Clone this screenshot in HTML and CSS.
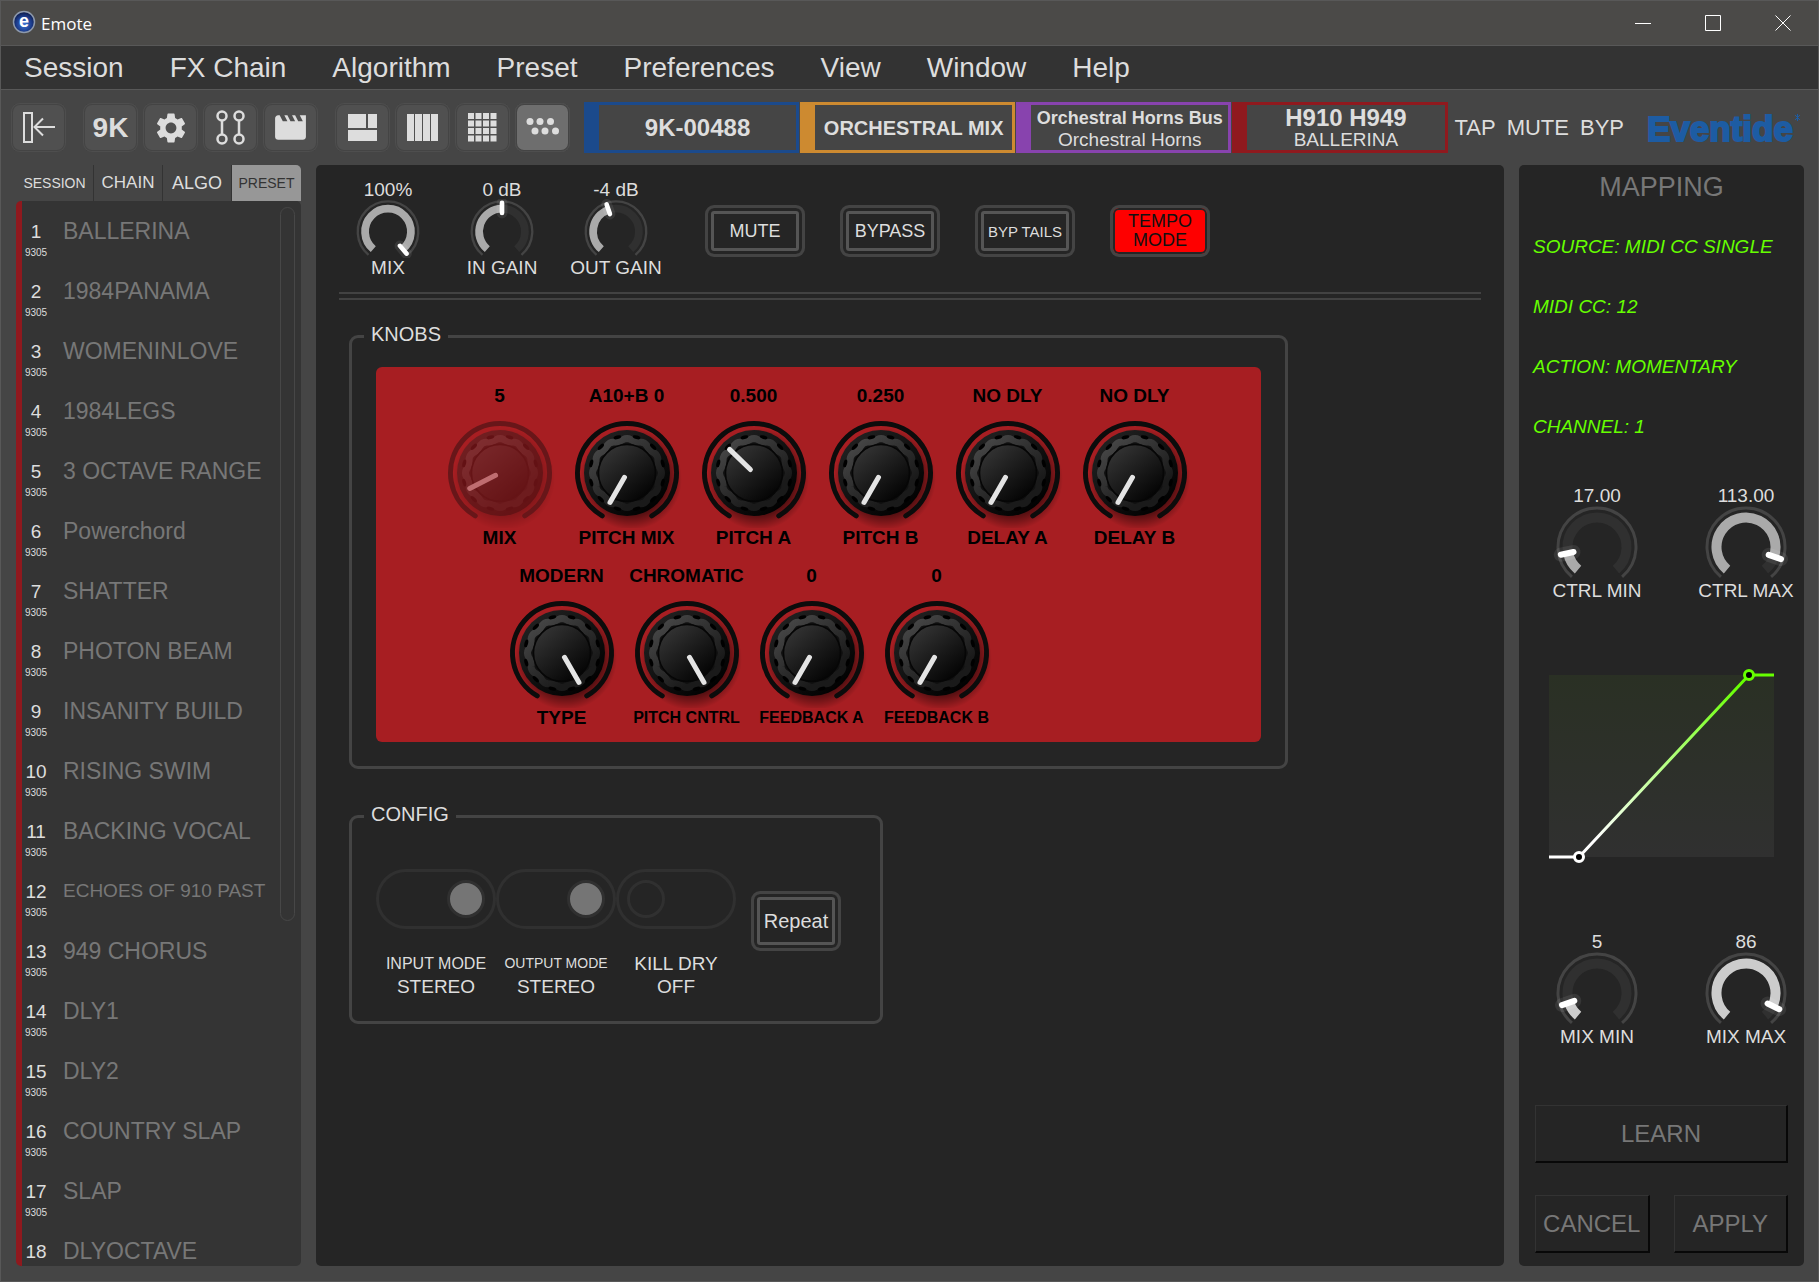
FILE: index.html
```html
<!DOCTYPE html>
<html lang="en">
<head>
    <meta charset="UTF-8">
    <meta name="viewport" content="width=device-width, initial-scale=1.0">
    <title>Emote</title>
    <link rel="stylesheet" href="styles.css">
</head>
<body>

<header class="titlebar">
    <svg class="app-icon" width="24" height="26" viewBox="0 0 24 26">
        <defs>
            <radialGradient id="appBall" cx="50%" cy="60%" r="60%">
                <stop offset="0" stop-color="#3f78d8"/>
                <stop offset="0.6" stop-color="#1c3c8c"/>
                <stop offset="1" stop-color="#0a1640"/>
            </radialGradient>
        </defs>
        <circle cx="12" cy="12" r="10.5" fill="url(#appBall)" stroke="#8d99ac" stroke-width="1.5"/>
        <text x="12" y="17" text-anchor="middle" class="app-e">e</text>
    </svg>
    <span class="app-name">Emote</span>
    <div class="window-buttons">
        <button aria-label="Minimize"><svg width="16" height="16"><path d="M0 8.5H16"/></svg></button>
        <button aria-label="Maximize"><svg width="16" height="16"><path d="M.5 .5H15.5V15.5H.5Z"/></svg></button>
        <button aria-label="Close"><svg width="16" height="16"><path d="M.5 .5L15.5 15.5M15.5 .5L.5 15.5"/></svg></button>
    </div>
</header>

<nav class="menubar">
    <button>Session</button>
    <button>FX Chain</button>
    <button>Algorithm</button>
    <button>Preset</button>
    <button>Preferences</button>
    <button>View</button>
    <button>Window</button>
    <button>Help</button>
</nav>

<div class="toolbar">
    <div class="tools">
        <button class="tool" aria-label="Collapse sidebar">
            <svg width="55" height="49"><path d="M13 10H21V39H13Z M44 24H24 M32 15.5L23.5 24L32 32.5" fill="none" stroke="#ddd" stroke-width="2"/></svg>
        </button>
    </div>
    <div class="tools">
        <button class="tool nine-k">9K</button>
        <button class="tool" aria-label="Settings">
            <svg width="36" height="36" viewBox="0 0 24 24"><path fill="#ddd" d="M19.14,12.94c0.04-0.3,0.06-0.61,0.06-0.94c0-0.32-0.02-0.64-0.07-0.94l2.03-1.58c0.18-0.14,0.23-0.41,0.12-0.61l-1.92-3.32c-0.12-0.22-0.37-0.29-0.59-0.22l-2.39,0.96c-0.5-0.38-1.03-0.7-1.62-0.94L14.4,2.81c-0.04-0.24-0.24-0.41-0.48-0.41h-3.84c-0.24,0-0.43,0.17-0.47,0.41L9.25,5.35C8.66,5.59,8.12,5.92,7.63,6.29L5.24,5.33c-0.22-0.08-0.47,0-0.59,0.22L2.74,8.87C2.62,9.08,2.66,9.34,2.86,9.48l2.03,1.58C4.84,11.36,4.8,11.69,4.8,12s0.02,0.64,0.07,0.94l-2.03,1.58c-0.18,0.14-0.23,0.41-0.12,0.61l1.92,3.32c0.12,0.22,0.37,0.29,0.59,0.22l2.39-0.96c0.5,0.38,1.03,0.7,1.62,0.94l0.36,2.54c0.05,0.24,0.24,0.41,0.48,0.41h3.84c0.24,0,0.44-0.17,0.47-0.41l0.36-2.54c0.59-0.24,1.13-0.56,1.62-0.94l2.39,0.96c0.22,0.08,0.47,0,0.59-0.22l1.92-3.32c0.12-0.22,0.07-0.47-0.12-0.61L19.14,12.94z M12,15.6c-1.98,0-3.6-1.62-3.6-3.6s1.62-3.6,3.6-3.6s3.6,1.62,3.6,3.6S13.98,15.6,12,15.6z"/></svg>
        </button>
        <button class="tool" aria-label="Routing">
            <svg width="55" height="49" fill="none" stroke="#ddd" stroke-width="2.5">
                <circle cx="19" cy="13" r="4.5"/><circle cx="36" cy="13" r="4.5"/>
                <circle cx="19" cy="36" r="4.5"/><circle cx="36" cy="36" r="4.5"/>
                <path d="M19 17.5V31.5M36 17.5V31.5"/>
            </svg>
        </button>
        <button class="tool" aria-label="Scenes">
            <svg width="37" height="37" viewBox="0 0 24 24"><path fill="#ddd" d="M18 4l2 4h-3l-2-4h-2l2 4h-3l-2-4H8l2 4H7L5 4H4c-1.1 0-1.99.9-1.99 2L2 18c0 1.1.9 2 2 2h16c1.1 0 2-.9 2-2V4h-4z"/></svg>
        </button>
    </div>
    <div class="tools">
        <button class="tool" aria-label="Split view">
            <svg width="55" height="49"><path fill="#ddd" d="M13 11H31V25H13ZM33 11H42V25H33ZM13 27H42V38H13Z"/></svg>
        </button>
        <button class="tool" aria-label="Column view">
            <svg width="55" height="49"><path fill="#ddd" d="M12 11H19V38H12ZM20 11H27V38H20ZM28 11H35V38H28ZM36 11H43V38H36Z"/></svg>
        </button>
        <button class="tool" aria-label="Grid view">
            <svg width="55" height="49"><path stroke="#ddd" stroke-width="6" stroke-dasharray="6 1.5" d="M13 13H42M13 20.5H42M13 28H42M13 35.5H42"/></svg>
        </button>
        <button class="tool active" aria-label="Knob view">
            <svg width="55" height="49" fill="#ddd">
                <circle cx="15" cy="18.5" r="3.5"/><circle cx="25" cy="18.5" r="3.5"/><circle cx="35.5" cy="18.5" r="3.5"/>
                <circle cx="20" cy="28" r="3.5"/><circle cx="30" cy="28" r="3.5"/><circle cx="40.5" cy="28" r="3.5"/>
            </svg>
        </button>
    </div>

    <div class="tracks">
        <button class="track blue"><b>9K-00488</b></button>
        <button class="track orange"><b class="medium">ORCHESTRAL MIX</b></button>
        <button class="track purple"><b class="small">Orchestral Horns Bus</b><span>Orchestral Horns</span></button>
        <button class="track red"><b>H910 H949</b><span>BALLERINA</span></button>
    </div>

    <div class="quick">
        <button>TAP</button>
        <button>MUTE</button>
        <button>BYP</button>
    </div>
    <svg class="logo" width="156" height="42" role="img" aria-label="Eventide">
        <text x="1" y="34">Eventide</text>
        <path d="M149 8l5 5M154 8l-5 5M151.5 7v7" stroke="#1d5ca3" stroke-width="1"/>
    </svg>
</div>

<div class="workspace">
    <aside class="sidebar">
        <div class="tabs">
            <button class="tight">SESSION</button>
            <button>CHAIN</button>
            <button class="algo">ALGO</button>
            <button class="tight active">PRESET</button>
        </div>
        <div class="presets">
            <ol id="presetList"></ol>
            <div class="scrollbar"></div>
        </div>
    </aside>

    <main class="panel">
        <div class="levels">
            <div class="dials" id="levelDials"></div>
            <div class="switches">
                <button class="framed">MUTE</button>
                <button class="framed">BYPASS</button>
                <button class="framed tails">BYP TAILS</button>
                <button class="framed on">TEMPO MODE</button>
            </div>
        </div>
        <div class="rule"></div>

        <fieldset class="group knobs-group">
            <legend>KNOBS</legend>
            <div class="faceplate">
                <div class="knob-row" id="knobsTop"></div>
                <div class="knob-row second" id="knobsBottom"></div>
            </div>
        </fieldset>

        <fieldset class="group config-group">
            <legend>CONFIG</legend>
            <label class="toggle"><input type="checkbox" checked><span class="long">INPUT MODE</span><span>STEREO</span></label>
            <label class="toggle"><input type="checkbox" checked><span class="longer">OUTPUT MODE</span><span>STEREO</span></label>
            <label class="toggle"><input type="checkbox"><span>KILL DRY</span><span>OFF</span></label>
            <button class="framed repeat">Repeat</button>
        </fieldset>
    </main>

    <aside class="panel mapping">
        <h2>MAPPING</h2>
        <ul class="source">
            <li>SOURCE: MIDI CC SINGLE</li>
            <li>MIDI CC: 12</li>
            <li>ACTION: MOMENTARY</li>
            <li>CHANNEL: 1</li>
        </ul>
        <div class="map-dials" id="ctrlDials"></div>
        <svg class="curve" width="241" height="198" viewBox="-8 -8 241 198">
            <defs>
                <linearGradient id="curveBack" x1="0" y1="0" x2="0" y2="1">
                    <stop offset="0" stop-color="#2a3024"/>
                    <stop offset="1" stop-color="#303030"/>
                </linearGradient>
                <linearGradient id="curveLine" gradientUnits="userSpaceOnUse" x1="0" y1="182" x2="0" y2="0">
                    <stop offset="0.1" stop-color="#fff"/>
                    <stop offset="0.95" stop-color="#6f0"/>
                </linearGradient>
            </defs>
            <rect width="225" height="182" fill="url(#curveBack)"/>
            <path d="M0 182H30L200 0H225" fill="none" stroke="url(#curveLine)" stroke-width="3"/>
            <circle cx="30" cy="182" r="4.5" stroke="#fff" stroke-width="3"/>
            <circle cx="200" cy="0" r="4.5" stroke="#6f0" stroke-width="3"/>
        </svg>
        <div class="map-dials" id="mixDials"></div>
        <div class="actions">
            <button class="learn">LEARN</button>
            <button>CANCEL</button>
            <button>APPLY</button>
        </div>
    </aside>
</div>

<!-- shared knob artwork -->
<svg class="defs" width="0" height="0" aria-hidden="true">
    <defs>
        <linearGradient id="bodyFill" x1="0.1" y1="0.1" x2="0.8" y2="0.9">
            <stop offset="0" stop-color="#222"/><stop offset="1" stop-color="#020202"/>
        </linearGradient>
        <linearGradient id="rimFill" x1="0.15" y1="0.1" x2="0.7" y2="0.8">
            <stop offset="0" stop-color="#444"/><stop offset="1" stop-color="#1a1a1a"/>
        </linearGradient>
        <linearGradient id="capFill" x1="0.15" y1="0.1" x2="0.8" y2="0.9">
            <stop offset="0" stop-color="#333"/><stop offset="1" stop-color="#050505"/>
        </linearGradient>
        <radialGradient id="shadowFill">
            <stop offset="0.7" stop-color="#000" stop-opacity="0.5"/><stop offset="1" stop-color="#000" stop-opacity="0"/>
        </radialGradient>
        <g id="knobBody"></g>
    </defs>
</svg>

<script src="script.js"></script>
</body>
</html>
```

FILE: styles.css
```css
* { box-sizing: border-box; }
body {
    margin: 0;
    height: 100vh;
    display: flex;
    flex-direction: column;
    background: #454545;
    border: 1px solid #585858;
    color: #ddd;
    font-family: "Liberation Sans", Arial, sans-serif;
    font-size: 19px;
    overflow: hidden;
}
button {
    margin: 0;
    padding: 0;
    border: none;
    background: none;
    color: inherit;
    font: inherit;
    cursor: pointer;
}
.defs { position: absolute; }

/* title bar */
.titlebar {
    height: 45px;
    flex: none;
    display: flex;
    align-items: center;
    padding-left: 11px;
    background: #4b4a48;
    border-bottom: 1px solid #585858;
}
.app-e { font: bold 18px "Liberation Sans", sans-serif; fill: #fff; }
.app-name {
    margin-left: 5px;
    color: #fff;
    font-family: "Open Sans", sans-serif;
    font-size: 17px;
}
.window-buttons { margin-left: auto; display: flex; }
.window-buttons button {
    width: 70px;
    height: 44px;
    display: flex;
    align-items: center;
    justify-content: center;
}
.window-buttons path { fill: none; stroke: #fff; }

/* menu */
.menubar {
    height: 44px;
    flex: none;
    display: flex;
    gap: 46px;
    padding-left: 23px;
    background: #333;
    border-bottom: 1px solid #585858;
    font-size: 28px;
}

/* toolbar */
.toolbar {
    height: 75px;
    flex: none;
    display: flex;
    align-items: center;
    padding: 0 16px 0 10px;
}
.tools { display: flex; gap: 5px; margin-right: 17px; }
.tool {
    width: 55px;
    height: 49px;
    display: flex;
    align-items: center;
    justify-content: center;
    background: #505050;
    border-radius: 9px;
    box-shadow: inset 0 0 0 1px #4e4e4e, inset 0 0 0 2px #444;
}
.tool.active { background: #6e6e6e; }
.nine-k { font-size: 28px; font-weight: bold; }
.tracks { flex: 1; min-width: 0; display: flex; gap: 1px; margin-left: -3px; }
.track {
    flex: 1 1 0;
    min-width: 0;
    height: 51px;
    display: flex;
    flex-direction: column;
    align-items: center;
    justify-content: center;
    border: 3px solid;
    border-left-width: 15px;
    font-size: 19px;
    line-height: 20px;
    white-space: nowrap;
}
.track b { font-size: 24px; line-height: 24px; }
.track b.medium { font-size: 20px; }
.track b.small { font-size: 18px; }
.track.blue { border-color: #1b4a8c; }
.track.orange { border-color: #cd8a30; }
.track.purple { border-color: #8843ae; }
.track.red { border-color: #8f191e; }
.quick {
    display: flex;
    gap: 11px;
    margin-left: 7px;
    font-size: 22px;
}
.logo { margin-left: 22px; }
.logo text {
    font: bold 35px "Liberation Sans", sans-serif;
    fill: #1d5ca3;
    stroke: #1d5ca3;
    stroke-width: 2px;
}

/* workspace */
.workspace {
    flex: 1;
    min-height: 0;
    display: flex;
    gap: 15px;
    padding: 0 14px 15px 15px;
}
.panel { background: #252525; border-radius: 5px; }

/* sidebar */
.sidebar {
    width: 285px;
    flex: none;
    display: flex;
    flex-direction: column;
}
.tabs {
    height: 36px;
    flex: none;
    display: grid;
    grid-template-columns: 78px 69px 69px 1fr;
    font-size: 17px;
}
.tabs button { border-right: 1px solid #333; }
.tabs .tight { font-size: 14px; }
.tabs .algo { font-size: 18px; }
.tabs .active {
    border: none;
    border-radius: 0 5px 0 0;
    background: #979797;
    color: #333;
}
.presets {
    position: relative;
    flex: 1;
    min-height: 0;
    overflow: hidden;
    background: #343434;
    border-left: 6px solid #8f191e;
    border-radius: 5px;
}
.presets ol { list-style: none; margin: 0; padding: 0; }
.presets li {
    height: 60px;
    display: grid;
    grid-template-columns: 28px 1fr;
    column-gap: 13px;
    padding-top: 18px;
    line-height: 24px;
}
.preset-no { text-align: center; line-height: 25px; }
.preset-no small { display: block; font-size: 10px; line-height: 18px; }
.preset-name { font-size: 23px; color: #777; white-space: nowrap; }
.preset-name.long { font-size: 19px; }
.scrollbar {
    position: absolute;
    top: 6px;
    right: 6px;
    width: 15px;
    height: 67%;
    border: 1px solid #474747;
    border-radius: 8px;
}

/* main panel */
main {
    flex: 1;
    min-width: 0;
    padding: 16px 23px;
}
.levels { display: flex; gap: 40px; }
.dials { display: flex; gap: 16px; }
.dial {
    position: relative;
    width: 98px;
    display: flex;
    flex-direction: column;
    align-items: center;
    line-height: 20px;
    white-space: nowrap;
}
.dial output { line-height: 18px; }
.dial svg { width: 70px; height: 59px; }
.dial input, .knob input {
    position: absolute;
    inset: 0;
    width: 100%;
    height: 100%;
    margin: 0;
    opacity: 0;
}
.switches { display: flex; gap: 35px; padding-top: 24px; }
.framed {
    width: 100px;
    height: 52px;
    border: 3px solid #444;
    border-radius: 9px;
    background: #252525;
    box-shadow: inset 0 0 0 3px #252525, inset 0 0 0 6px #555;
    font-size: 18px;
    line-height: 19px;
}
.framed.tails { font-size: 15px; }
.framed.on {
    padding: 0 10px;
    background: #fe0000;
    color: #111;
    box-shadow: inset 0 0 0 2px #252525;
}
.rule {
    height: 8px;
    margin: 14px 0 24px;
    border: solid #424242;
    border-width: 2px 0;
}
.group {
    margin: 0 0 35px 10px;
    border: 3px solid #444;
    border-radius: 9px;
}
.group legend {
    margin-left: -12px;
    padding: 0 7px 4px;
    font-size: 20px;
    line-height: 20px;
}
.knobs-group { max-width: 939px; padding: 19px 24px 24px; }
.faceplate {
    display: flex;
    flex-direction: column;
    gap: 18px;
    padding: 19px 0 14px;
    background: #a71e22;
    border-radius: 6px;
    color: #000;
    font-weight: bold;
}
.knob-row { display: flex; padding-left: 60px; }
.knob-row.second { padding-left: 123px; }
.knob {
    position: relative;
    width: 127px;
    display: flex;
    flex-direction: column;
    align-items: center;
    line-height: 20px;
    white-space: nowrap;
}
.second .knob { width: 125px; }
.knob .long { font-size: 16px; }
.knob.disabled svg { opacity: 0.4; }

/* config */
.config-group {
    width: fit-content;
    display: flex;
    padding: 41px 39px 23px 24px;
}
.toggle {
    width: 120px;
    display: flex;
    flex-direction: column;
    align-items: center;
    line-height: 23px;
    white-space: nowrap;
}
.toggle input {
    appearance: none;
    width: 120px;
    height: 60px;
    margin: 0 0 23px;
    padding: 8px;
    display: flex;
    border: 3px solid #303030;
    border-radius: 30px;
}
.toggle input::before {
    content: "";
    width: 32px;
    height: 32px;
    border: 3px solid #303030;
    border-radius: 50%;
}
.toggle input:checked { justify-content: flex-end; }
.toggle input:checked::before { background: #757575; }
.toggle .long { font-size: 16px; }
.toggle .longer { font-size: 14px; }
.repeat {
    width: 90px;
    height: 60px;
    margin: 22px 0 0 15px;
    font-size: 20px;
}

/* mapping panel */
.mapping {
    width: 285px;
    flex: none;
    display: flex;
    flex-direction: column;
    padding: 7px 14px 13px;
}
.mapping h2 {
    margin: 0;
    color: #777;
    font-size: 27px;
    font-weight: normal;
    line-height: 30px;
    text-align: center;
}
.source {
    margin: 15px 0 30px;
    padding: 0;
    list-style: none;
    color: #6f0;
    font-style: italic;
    line-height: 60px;
    white-space: nowrap;
}
.map-dials { display: flex; justify-content: space-between; margin: 0 -5px 0 15px; }
.map-dials .dial svg { width: 90px; height: 76px; }
.curve { margin: 66px 0 68px 8px; }
.actions {
    margin-top: auto;
    display: grid;
    grid-template-columns: 1fr 1fr;
    gap: 32px 24px;
    padding: 0 2px;
}
.actions button {
    height: 58px;
    border: 1px solid #333;
    border-width: 1px 2px 2px 1px;
    border-right-color: #080808;
    border-bottom-color: #080808;
    color: #777;
    font-size: 24px;
}
.actions .learn { grid-column: span 2; }
```

FILE: script.js
```js
const presets = [
    'BALLERINA', '1984PANAMA', 'WOMENINLOVE', '1984LEGS', '3 OCTAVE RANGE', 'Powerchord',
    'SHATTER', 'PHOTON BEAM', 'INSANITY BUILD', 'RISING SWIM', 'BACKING VOCAL',
    'ECHOES OF 910 PAST', '949 CHORUS', 'DLY1', 'DLY2', 'COUNTRY SLAP', 'SLAP', 'DLYOCTAVE'
];

// angle: degrees clockwise from 12 o'clock
const levelDials = [
    { label: 'MIX', value: '100%', angle: 140 },
    { label: 'IN GAIN', value: '0 dB', angle: 0 },
    { label: 'OUT GAIN', value: '-4 dB', angle: -19 }
];
const ctrlDials = [
    { label: 'CTRL MIN', value: '17.00', angle: -102 },
    { label: 'CTRL MAX', value: '113.00', angle: 109 }
];
const mixDials = [
    { label: 'MIX MIN', value: '5', angle: -109, color: '#ccc' },
    { label: 'MIX MAX', value: '86', angle: 116, color: '#ccc' }
];
const knobsTop = [
    { label: 'MIX', value: '5', angle: -117, disabled: true },
    { label: 'PITCH MIX', value: 'A10+B 0', angle: -150 },
    { label: 'PITCH A', value: '0.500', angle: -46 },
    { label: 'PITCH B', value: '0.250', angle: -150 },
    { label: 'DELAY A', value: 'NO DLY', angle: -150 },
    { label: 'DELAY B', value: 'NO DLY', angle: -150 }
];
const knobsBottom = [
    { label: 'TYPE', value: 'MODERN', angle: 150 },
    { label: 'PITCH CNTRL', value: 'CHROMATIC', angle: 150 },
    { label: 'FEEDBACK A', value: '0', angle: -150 },
    { label: 'FEEDBACK B', value: '0', angle: -150 }
];

function point(r, deg) {
    const a = deg * Math.PI / 180;
    return (r * Math.sin(a)).toFixed(2) + ' ' + (-r * Math.cos(a)).toFixed(2);
}

function arc(r, from, to) {
    const large = to - from > 180 ? 1 : 0;
    return `M${point(r, from)}A${r} ${r} 0 ${large} 1 ${point(r, to)}`;
}

function slider(k, min, max) {
    return `<input type="range" min="${min}" max="${max}" value="${k.angle}" aria-label="${k.label}"${k.disabled ? ' disabled' : ''}>`;
}

function dialHtml(k) {
    return `<label class="dial">
        <output>${k.value}</output>
        <svg viewBox="-45 -42 90 76" fill="none">
            <path d="${arc(39, -140, 140)}" stroke="#444" stroke-width="3"/>
            <path d="${arc(29.5, -140, 140)}" stroke="#303030" stroke-width="10"/>
            <path d="${arc(29.5, -140, k.angle)}" stroke="${k.color || '#aaa'}" stroke-width="10"/>
            <g transform="rotate(${k.angle})" stroke-linecap="round">
                <path d="M0 -24V-37" stroke="#fff" stroke-opacity="0.08" stroke-width="14"/>
                <path d="M0 -24V-37" stroke="#fff" stroke-width="6"/>
            </g>
        </svg>
        <span>${k.label}</span>
        ${slider(k, -140, 140)}
    </label>`;
}

function knobHtml(k) {
    return `<label class="knob${k.disabled ? ' disabled' : ''}">
        <output>${k.value}</output>
        <svg width="120" height="122" viewBox="-60 -67 120 122">
            <use href="#knobBody"/>
            <path d="M0 -5V-34" transform="rotate(${k.angle})" stroke="#e4e4e4" stroke-width="5" stroke-linecap="round"/>
        </svg>
        <span${k.label.length > 9 ? ' class="long"' : ''}>${k.label}</span>
        ${slider(k, -150, 150)}
    </label>`;
}

// scalloped rim: twelve lobes around the cap
function knobBody() {
    const pts = [];
    for (let a = 0; a < 360; a += 3) {
        pts.push(point(33.5 + Math.cos(12 * a * Math.PI / 180), a));
    }
    let notches = '';
    for (let a = 15; a < 360; a += 30) {
        notches += `<ellipse cx="0" cy="-37" rx="4" ry="1.8" fill="#000" transform="rotate(${a})"/>`;
    }
    return `<circle cx="4" cy="6" r="51" fill="url(#shadowFill)"/>
        <path d="${arc(49.5, -150, 150)}" fill="none" stroke="#0c0c0c" stroke-width="5" stroke-linecap="round"/>
        <circle r="43" fill="url(#bodyFill)"/>
        <path d="M${pts.join('L')}Z" fill="#111" stroke="url(#rimFill)" stroke-width="7"/>
        ${notches}
        <circle r="28.5" fill="url(#capFill)" stroke="#060606" stroke-width="1.5"/>`;
}

function fill(id, list, toHtml) {
    document.getElementById(id).innerHTML = list.map(toHtml).join('');
}

document.getElementById('knobBody').innerHTML = knobBody();
fill('levelDials', levelDials, dialHtml);
fill('ctrlDials', ctrlDials, dialHtml);
fill('mixDials', mixDials, dialHtml);
fill('knobsTop', knobsTop, knobHtml);
fill('knobsBottom', knobsBottom, knobHtml);
fill('presetList', presets, (name, i) => `<li>
    <span class="preset-no">${i + 1}<small>9305</small></span>
    <span class="preset-name${name.length > 15 ? ' long' : ''}">${name}</span>
</li>`);
```
